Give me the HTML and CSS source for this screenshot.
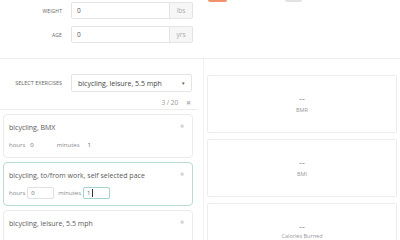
FILE: index.html
```html
<!DOCTYPE html>
<html lang="en">
<head>
  <meta charset="UTF-8">
  <title>Calorie Calculator</title>
  <link rel="stylesheet" href="styles.css">
</head>
<body>
  <div class="top">
    <div class="form">
      <div class="row">
        <label>WEIGHT</label>
        <div class="field"><span class="value">0</span><span class="addon">lbs</span></div>
      </div>
      <div class="row">
        <label>AGE</label>
        <div class="field"><span class="value">0</span><span class="addon">yrs</span></div>
      </div>
    </div>
    <div class="actions">
      <span class="btn btn-orange"></span>
      <span class="btn btn-grey"></span>
    </div>
  </div>

  <div class="main">
    <div class="left">
      <div class="row select-row">
        <label>SELECT EXERCISES</label>
        <div class="select"><span>bicycling, leisure, 5.5 mph</span><span class="caret">&#9662;</span></div>
      </div>
      <div class="counter">3 / 20 <span class="x">&#10006;</span></div>

      <div class="card">
        <div class="card-title">bicycling, BMX <span class="x">&#10006;</span></div>
        <div class="card-fields">
          <span class="lbl">hours</span><span class="num">0</span>
          <span class="lbl mins">minutes</span><span class="num">1</span>
        </div>
      </div>

      <div class="card active">
        <div class="card-title">bicycling, to/from work, self selected pace <span class="x">&#10006;</span></div>
        <div class="card-fields">
          <span class="lbl">hours</span><span class="box">0</span>
          <span class="lbl">minutes</span><span class="box focus">1<i class="cursor"></i></span>
        </div>
      </div>

      <div class="card last">
        <div class="card-title">bicycling, leisure, 5.5 mph <span class="x">&#10006;</span></div>
      </div>
    </div>

    <div class="right">
      <div class="panel"><div class="dash">--</div><div class="cap">BMR</div></div>
      <div class="panel"><div class="dash">--</div><div class="cap">BMI</div></div>
      <div class="panel"><div class="dash">--</div><div class="cap">Calories Burned</div></div>
    </div>
  </div>
</body>
</html>
```

FILE: styles.css
```css
body {
  margin: 0;
  font-family: "Open Sans", sans-serif;
  color: #555;
  background: #fff;
  overflow: hidden;
  height: 240px;
}

/* top form */
.top {
  display: flex;
  height: 58px;
  border-bottom: 1px solid #ececec;
}
.form {
  width: 197px;
  padding-top: 2px;
}
.row {
  display: flex;
  align-items: center;
  height: 17px;
  margin-bottom: 7px;
}
.row label {
  width: 62px;
  margin-right: 9px;
  text-align: right;
  font-size: 5px;
  color: #666;
  letter-spacing: 0.1px;
}
.field {
  display: flex;
  width: 122px;
  height: 17px;
  box-sizing: border-box;
  border: 1px solid #e4e4e4;
  border-radius: 2px;
  font-size: 6.5px;
}
.field .value {
  flex: 1;
  padding-left: 5px;
  line-height: 15px;
}
.field .addon {
  width: 22px;
  background: #f6f6f6;
  border-left: 1px solid #e4e4e4;
  color: #aaa;
  text-align: center;
  line-height: 15px;
}
.actions {
  flex: 1;
  display: flex;
  align-items: flex-start;
}
.btn {
  display: block;
  height: 2px;
  border-radius: 0 0 2px 2px;
}
.btn-orange {
  width: 19px;
  margin-left: 11px;
  background: #f0936a;
}
.btn-grey {
  width: 17px;
  margin-left: 58px;
  background: #e2e2e2;
}

/* exercises */
.main {
  display: flex;
}
.left {
  width: 197px;
}
.select-row {
  margin-top: 15px;
  height: 18px;
}
.select-row label {
  font-size: 5.5px;
  letter-spacing: 0;
}
.select {
  display: flex;
  justify-content: space-between;
  align-items: center;
  width: 121px;
  height: 18px;
  box-sizing: border-box;
  border: 1px solid #e4e4e4;
  border-radius: 2px;
  padding: 0 6px;
  font-size: 7px;
  color: #444;
}
.caret {
  font-size: 5px;
  color: #555;
}
.counter {
  margin-top: -1px;
  height: 11px;
  border-bottom: 1px solid #ececec;
  text-align: right;
  padding-right: 6px;
  font-size: 6.5px;
  color: #999;
}
.counter .x {
  margin-left: 6px;
  color: #bbb;
  font-size: 6px;
}
.card {
  margin: 4px 4px 0 3px;
  height: 44px;
  box-sizing: border-box;
  border: 1px solid #ebebeb;
  border-radius: 4px;
  padding: 8px 5px 0 5px;
}
.card.active {
  border-color: #b9ddd6;
}
.card-title {
  display: flex;
  justify-content: space-between;
  font-size: 7px;
  color: #5a5a5a;
  height: 12px;
}
.card-title .x {
  color: #ccc;
  font-size: 5px;
  padding-right: 3px;
}
.card-fields {
  display: flex;
  align-items: center;
  margin-top: 4px;
  font-size: 6px;
  color: #888;
  height: 12px;
}
.card-fields .num {
  margin-left: 5px;
  color: #666;
}
.card-fields .mins {
  margin-left: 23px;
  margin-right: 3px;
}
.box {
  display: inline-flex;
  align-items: center;
  width: 27px;
  height: 12px;
  box-sizing: border-box;
  border: 1px solid #e0e0e0;
  border-radius: 2px;
  margin: 0 4px 0 2px;
  padding-left: 3px;
  color: #666;
}
.box.focus {
  border-color: #9fd3cc;
}
.cursor {
  display: inline-block;
  width: 1px;
  height: 8px;
  background: #333;
  margin-left: 1px;
}

/* results */
.right {
  flex: 1;
  border-left: 1px solid #f2f2f2;
  margin-left: 6px;
  padding: 16px 3px 0 3px;
}
.panel {
  height: 58px;
  box-sizing: border-box;
  border: 1px solid #ececec;
  border-radius: 2px;
  margin-bottom: 6px;
  display: flex;
  flex-direction: column;
  align-items: center;
  justify-content: center;
}
.dash {
  font-size: 9px;
  color: #888;
  line-height: 9px;
}
.cap {
  font-size: 5.5px;
  color: #999;
  line-height: 8px;
  margin-top: 3px;
}
.panel:last-child {
  justify-content: flex-start;
  padding-top: 18px;
}
.panel:last-child .cap {
  margin-top: 1px;
}
```
